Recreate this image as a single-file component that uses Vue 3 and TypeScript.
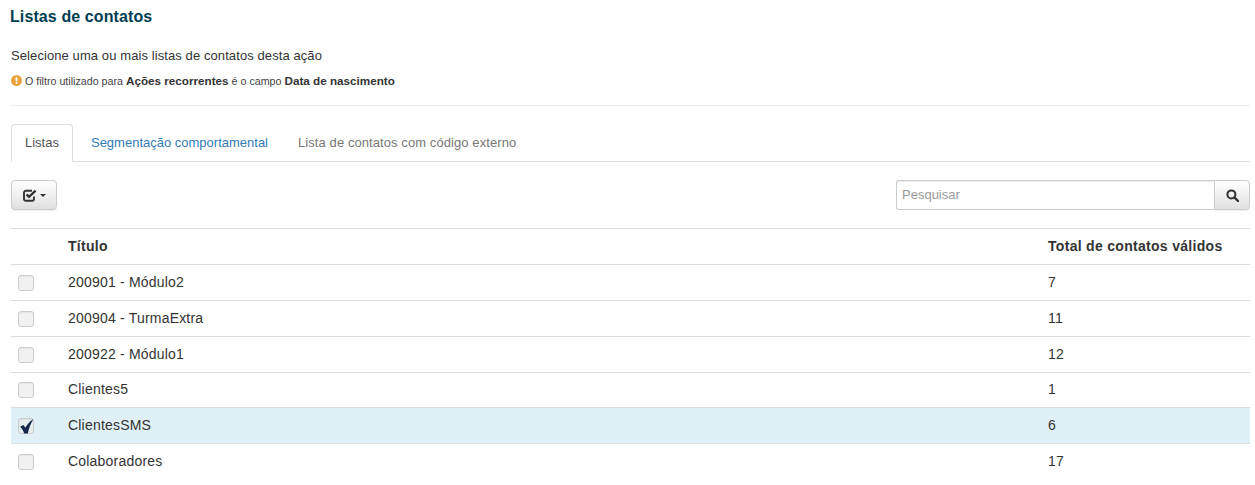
<script setup lang="ts">
interface Lista {
  titulo: string
  total: number
  checked?: boolean
}

const listas: Lista[] = [
  { titulo: '200901 - Módulo2', total: 7 },
  { titulo: '200904 - TurmaExtra', total: 11 },
  { titulo: '200922 - Módulo1', total: 12 },
  { titulo: 'Clientes5', total: 1 },
  { titulo: 'ClientesSMS', total: 6, checked: true },
  { titulo: 'Colaboradores', total: 17 }
]
</script>

<template>
  <div class="page">
    <h4 class="title">Listas de contatos</h4>
    <p class="lead">Selecione uma ou mais listas de contatos desta ação</p>
    <p class="hint">
      <svg class="hint-icon" width="11" height="11" viewBox="0 0 12 12">
        <circle cx="6" cy="6" r="6" fill="#e8a33d" />
        <rect x="5" y="2.4" width="2" height="4.6" rx="0.6" fill="#fff" />
        <rect x="5" y="8" width="2" height="1.8" rx="0.5" fill="#fff" />
      </svg>
      O filtro utilizado para <b>Ações recorrentes</b> é o campo <b>Data de nascimento</b>
    </p>
    <hr class="divider" />

    <ul class="tabs">
      <li class="tab active">Listas</li>
      <li class="tab link">Segmentação comportamental</li>
      <li class="tab muted">Lista de contatos com código externo</li>
    </ul>

    <div class="toolbar">
      <button class="btn check-btn">
        <svg width="14" height="13" viewBox="0 0 14 13" fill="none" stroke="#333">
          <path d="M11 7.5V10A1.8 1.8 0 0 1 9.2 11.8H2.8A1.8 1.8 0 0 1 1 10V3.6A1.8 1.8 0 0 1 2.8 1.8H9" stroke-width="1.9" />
          <path d="M3.6 5.4L6 7.8L12.6 1.6" stroke-width="2.3" />
        </svg>
        <span class="caret"></span>
      </button>
      <div class="search">
        <input class="search-input" type="text" placeholder="Pesquisar" />
        <button class="btn search-btn">
          <svg width="13" height="13" viewBox="0 0 13 13" fill="none" stroke="#333">
            <circle cx="5.4" cy="5.4" r="4" stroke-width="2" />
            <path d="M8.4 8.4L12 12" stroke-width="2.4" stroke-linecap="round" />
          </svg>
        </button>
      </div>
    </div>

    <table class="grid">
      <thead>
        <tr>
          <th class="col-check"></th>
          <th>Título</th>
          <th class="col-total">Total de contatos válidos</th>
        </tr>
      </thead>
      <tbody>
        <tr v-for="l in listas" :key="l.titulo" :class="{ selected: l.checked }">
          <td class="col-check">
            <span class="box">
              <svg v-if="l.checked" class="tick" width="16" height="16" viewBox="0 0 16 16">
                <path d="M1.2 8.8L4.4 7L6.4 9.8C8 6.8 10.4 3.6 14.4 1C12 5 10 9.8 8.8 15.4H5.2C4.4 12.8 3 10.6 1.2 8.8Z" fill="#15284b" />
              </svg>
            </span>
          </td>
          <td>{{ l.titulo }}</td>
          <td class="col-total">{{ l.total }}</td>
        </tr>
      </tbody>
    </table>
  </div>
</template>

<style>
body {
  background: #fff;
}
</style>

<style scoped>
.page {
  box-sizing: border-box;
  width: 1255px;
  height: 485px;
  overflow: hidden;
  padding: 8px 5px 0 11px;
  font-family: "Liberation Sans", Arial, sans-serif;
  font-size: 13px;
  color: #333;
}

.title {
  margin: 0 0 0 -1px;
  font-size: 16px;
  line-height: 18px;
  letter-spacing: 0.1px;
  font-weight: bold;
  color: #003d52;
}

.lead {
  margin: 22px 0 0;
  font-size: 13px;
  line-height: 16px;
  letter-spacing: 0.09px;
}

.hint {
  margin: 10px 0 0;
  font-size: 10.7px;
  line-height: 14px;
  color: #444;
}

.hint b {
  font-size: 11.7px;
  color: #333;
}

.hint-icon {
  vertical-align: -1px;
}

.divider {
  margin: 17px 0 0;
  border: 0;
  border-top: 1px solid #eee;
}

.tabs {
  display: flex;
  margin: 18px 0 0;
  padding: 0;
  height: 37px;
  list-style: none;
  border-bottom: 1px solid #ddd;
}

.tab {
  box-sizing: border-box;
  height: 38px;
  padding: 10px 13px;
  margin-right: 2px;
  font-size: 13px;
  line-height: 16px;
  border: 1px solid transparent;
  border-radius: 4px 4px 0 0;
}

.tab.active {
  margin-right: 4px;
  color: #555;
  background: #fff;
  border-color: #ddd #ddd #fff;
}

.tab.link {
  color: #337ab7;
}

.tab.muted {
  color: #777;
  letter-spacing: 0.08px;
}

.toolbar {
  display: flex;
  justify-content: space-between;
  margin-top: 18px;
}

.btn {
  display: flex;
  align-items: center;
  justify-content: center;
  box-sizing: border-box;
  height: 30px;
  padding: 0;
  border: 1px solid #ccc;
  border-radius: 4px;
  background: linear-gradient(to bottom, #fff, #e0e0e0);
  box-shadow: inset 0 1px 0 rgba(255, 255, 255, 0.15), 0 1px 1px rgba(0, 0, 0, 0.075);
}

.check-btn {
  width: 46px;
  gap: 3px;
}

.caret {
  width: 0;
  height: 0;
  border-top: 3px solid #333;
  border-left: 3px solid transparent;
  border-right: 3px solid transparent;
}

.search {
  display: flex;
  width: 354px;
}

.search-input {
  box-sizing: border-box;
  flex: 1;
  min-width: 0;
  height: 30px;
  padding: 0 5px 2px;
  font-family: inherit;
  font-size: 13px;
  color: #555;
  border: 1px solid #ccc;
  border-right: 0;
  border-radius: 3px 0 0 3px;
  box-shadow: inset 0 1px 1px rgba(0, 0, 0, 0.075);
  outline: none;
}

.search-input::placeholder {
  color: #999;
  opacity: 1;
}

.search-btn {
  width: 36px;
  border-radius: 0 4px 4px 0;
}

.grid {
  width: 100%;
  margin-top: 18px;
  border-collapse: collapse;
  font-size: 14px;
  letter-spacing: 0.2px;
}

.grid th,
.grid td {
  box-sizing: border-box;
  height: 36px;
  padding: 0 0 2px 8px;
  text-align: left;
  vertical-align: middle;
  border-top: 1px solid #ddd;
}

.grid tbody tr:nth-child(4) td {
  height: 35px;
}

.grid th {
  font-weight: bold;
  letter-spacing: 0.3px;
  border-bottom: 1px solid #ddd;
}

.col-check {
  width: 49px;
}

.grid .col-total {
  width: 210px;
}

.selected td {
  background: #dff0f6;
}

.box {
  position: relative;
  display: block;
  width: 16px;
  height: 16px;
  margin: 2px 0 0 -1px;
  box-sizing: border-box;
  border: 1px solid #ccc;
  border-radius: 3px;
  background: #f1f1f1;
  box-shadow: inset 0 1px 1px rgba(0, 0, 0, 0.05);
}

.selected .box {
  background: #e6eef1;
}

.tick {
  position: absolute;
  left: 0;
  top: -1px;
}
</style>
